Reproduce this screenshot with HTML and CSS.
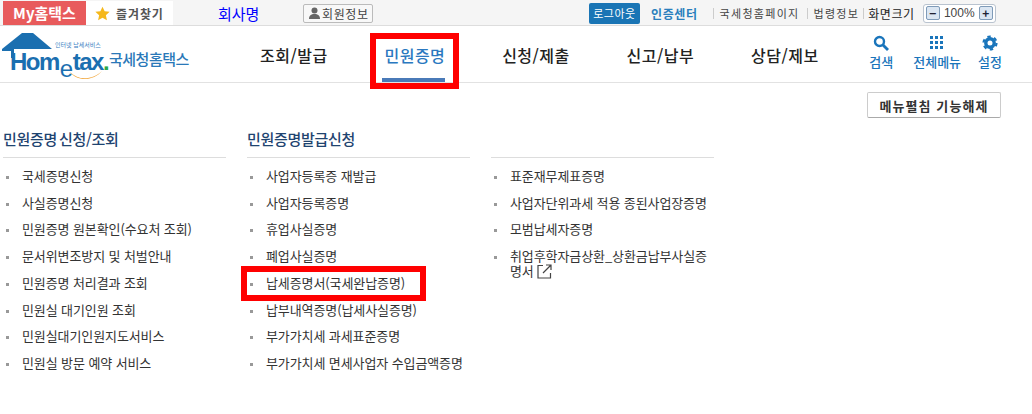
FILE: index.html
```html
<!DOCTYPE html>
<html lang="ko">
<head>
    <meta charset="UTF-8">
    <title>국세청홈택스</title>
    <link rel="stylesheet" href="styles.css">
</head>
<body>
    <!-- 상단 바 -->
    <div class="top-bar">
        <a class="my-tab">My홈택스</a>
        <div class="fav">
            <svg class="star" width="15" height="15" viewBox="0 0 24 24"><path d="M12 1l3.400 7.400 8 .9-6 5.400 1.700 8L12 18.700l-7.100 4 1.700-8-6-5.400 8-.9z" fill="#f5b81c"/></svg>
            <span>즐겨찾기</span>
        </div>
        <span class="company">회사명</span>
        <a class="member-btn">
            <svg width="11" height="12" viewBox="0 0 11 12"><circle cx="5.500" cy="3.500" r="3" fill="#666"/><path d="M0 12c0-3.500 2-5 5.500-5s5.500 1.500 5.500 5z" fill="#666"/></svg>
            회원정보
        </a>
        <div class="top-right">
            <a class="logout">로그아웃</a>
            <a class="cert">인증센터</a>
            <a class="util first">국세청홈페이지</a>
            <a class="util">법령정보</a>
            <a class="util dark">화면크기</a>
            <div class="zoom-box">
                <span class="zoom-btn">−</span>
                <span class="zoom-val">100%</span>
                <span class="zoom-btn">+</span>
            </div>
        </div>
    </div>

    <!-- 로고 + 메인메뉴 -->
    <header class="main-head">
        <div class="logo">
            <svg class="logo-house" width="54" height="26" viewBox="0 0 54 26"><path d="M0 16L20 0H31L50 16H12V25H9V18H0z" fill="#1b6fb0"/></svg>
            <span class="logo-small">인터넷 납세서비스</span>
            <span class="logo-word">Hom<em>e</em>tax<i>.</i></span>
            <svg class="logo-smile" width="34" height="10" viewBox="0 0 34 10"><path d="M1 2c9 9 22 8 32-1-8 10-25 11-32 1z" fill="#f2a63a"/></svg>
            <span class="logo-name">국세청홈택스</span>
        </div>
        <nav class="main-nav">
            <a>조회/발급</a>
            <a class="active">민원증명</a>
            <a>신청/제출</a>
            <a>신고/납부</a>
            <a>상담/제보</a>
        </nav>
        <div class="tools">
            <a class="tool">
                <svg width="16" height="16" viewBox="0 0 16 16"><circle cx="6.500" cy="6.500" r="4.500" fill="none" stroke="#1a75bb" stroke-width="2.400"/><path d="M10 10l5 5" stroke="#1a75bb" stroke-width="2.800"/></svg>
                검색
            </a>
            <a class="tool">
                <svg width="16" height="16" viewBox="0 0 16 16" fill="#1a75bb"><rect x="1" y="1" width="3" height="3"/><rect x="6" y="1" width="3" height="3"/><rect x="11" y="1" width="3" height="3"/><rect x="1" y="6" width="3" height="3"/><rect x="6" y="6" width="3" height="3"/><rect x="11" y="6" width="3" height="3"/><rect x="1" y="11" width="3" height="3"/><rect x="6" y="11" width="3" height="3"/><rect x="11" y="11" width="3" height="3"/></svg>
                전체메뉴
            </a>
            <a class="tool">
                <svg width="16" height="16" viewBox="0 0 16 16" fill="none" stroke="#1a75bb"><circle cx="8" cy="8" r="4.200" stroke-width="3.400"/><circle cx="8" cy="8" r="6.500" stroke-width="2.200" stroke-dasharray="3.400 3.400"/></svg>
                설정
            </a>
        </div>
    </header>

    <div class="btn-row">
        <button class="unfold-btn">메뉴펼침 기능해제</button>
    </div>

    <!-- 메뉴 목록 -->
    <div class="menu-wrap">
        <section class="menu-col">
            <h2>민원증명 신청/조회</h2>
            <ul>
                <li>국세증명신청</li>
                <li>사실증명신청</li>
                <li>민원증명 원본확인(수요처 조회)</li>
                <li>문서위변조방지 및 처벌안내</li>
                <li>민원증명 처리결과 조회</li>
                <li>민원실 대기인원 조회</li>
                <li>민원실대기인원지도서비스</li>
                <li>민원실 방문 예약 서비스</li>
            </ul>
        </section>
        <section class="menu-col">
            <h2>민원증명발급신청</h2>
            <ul>
                <li>사업자등록증 재발급</li>
                <li>사업자등록증명</li>
                <li>휴업사실증명</li>
                <li>폐업사실증명</li>
                <li class="marked">납세증명서(국세완납증명)</li>
                <li>납부내역증명(납세사실증명)</li>
                <li>부가가치세 과세표준증명</li>
                <li>부가가치세 면세사업자 수입금액증명</li>
            </ul>
        </section>
        <section class="menu-col">
            <h2 class="blank">&nbsp;</h2>
            <ul>
                <li>표준재무제표증명</li>
                <li>사업자단위과세 적용 종된사업장증명</li>
                <li>모범납세자증명</li>
                <li>취업후학자금상환_상환금납부사실증명서
                    <svg class="ext" width="15" height="15" viewBox="0 0 15 15" fill="none" stroke="#444" stroke-width="1.200"><path d="M6 1.500H1v12.500h12.500V9"/><path d="M9 1h5v5M14 1L6 9"/></svg>
                </li>
            </ul>
        </section>
    </div>
</body>
</html>
```

FILE: styles.css
```css
*, *::before, *::after {
    box-sizing: border-box;
}
html, body {
    margin: 0;
    padding: 0;
}
body {
    width: 1032px;
    height: 414px;
    overflow: hidden;
    background: #fff;
    color: #333;
    font-family: "Noto Sans CJK KR", "Noto Sans", sans-serif;
    font-size: 12px;
}
a {
    text-decoration: none;
    color: inherit;
}

/* top bar */
.top-bar {
    display: flex;
    align-items: center;
    height: 26px;
    padding: 1px 0 0 3px;
    background: #f5f5f5;
    border-bottom: 1px solid #ddd;
}
.my-tab {
    width: 83px;
    height: 24px;
    line-height: 23px;
    text-align: center;
    background: #e85b5c;
    color: #fff;
    font-size: 15px;
    font-weight: 700;
}
.fav {
    display: flex;
    align-items: center;
    width: 87px;
    height: 24px;
    padding-left: 9px;
    background: #fff;
    color: #555;
    font-weight: 700;
    letter-spacing: 0.9px;
}
.star {
    margin-right: 6px;
}
.company {
    width: 42px;
    margin-left: 45px;
    color: #0000ff;
    font-size: 15px;
    white-space: nowrap;
}
.member-btn {
    display: flex;
    align-items: center;
    gap: 2px;
    width: 70px;
    height: 19px;
    margin-left: 43px;
    padding-left: 5px;
    border: 1px solid #bbb;
    border-radius: 2px;
    background: #f8f8f8;
    color: #444;
    font-size: 12px;
    letter-spacing: 0.6px;
}
.top-right {
    display: flex;
    align-items: center;
    margin-left: 216px;
}
.logout {
    width: 51px;
    height: 21px;
    line-height: 20px;
    text-align: center;
    border-radius: 2px;
    background: #1a75b5;
    color: #fff;
    font-size: 11px;
    letter-spacing: 0.5px;
}
.cert {
    margin-left: 11px;
    color: #2a7fbd;
    font-weight: 700;
    font-size: 12px;
    letter-spacing: 0.6px;
}
.util {
    margin-left: 7px;
    padding-left: 6px;
    border-left: 1px solid #ccc;
    line-height: 11px;
    font-size: 11px;
    letter-spacing: 1.300px;
    color: #444;
}
.util.first {
    margin-left: 15px;
}
.util.dark {
    margin-left: 4px;
    padding-left: 4px;
    color: #222;
    font-size: 12px;
    letter-spacing: 0.6px;
}
.zoom-box {
    display: flex;
    align-items: center;
    justify-content: space-between;
    width: 73px;
    height: 19px;
    margin-left: 8px;
    padding: 0 2px;
    border: 1px solid #b9c3cf;
    border-radius: 3px;
    background: #fff;
}
.zoom-btn {
    width: 14px;
    height: 14px;
    line-height: 12px;
    text-align: center;
    border: 1px solid #7f9bb8;
    border-radius: 2px;
    background: #dbe6f2;
    color: #223;
    font-size: 12px;
    font-weight: 700;
}
.zoom-val {
    font-family: "Liberation Sans", sans-serif;
    font-size: 12px;
    color: #444;
}

/* logo + main menu */
.main-head {
    display: flex;
    height: 57px;
    border-bottom: 1px solid #e2e2e2;
}
.logo {
    position: relative;
    width: 231px;
    height: 56px;
}
.logo-house {
    position: absolute;
    left: 2px;
    top: 7px;
}
.logo-small {
    position: absolute;
    left: 55px;
    top: 15px;
    font-size: 6px;
    line-height: 8px;
    color: #3a7fbf;
    white-space: nowrap;
}
.logo-word {
    position: absolute;
    left: 10px;
    top: 24px;
    font-family: "Liberation Sans", sans-serif;
    font-size: 24px;
    line-height: 24px;
    font-weight: 700;
    letter-spacing: -1.500px;
    color: #1b6fb0;
}
.logo-word em {
    position: relative;
    top: 7px;
    margin: 0 1px;
    font-style: normal;
    font-weight: 400;
}
.logo-word i {
    font-style: normal;
    color: #2aa84a;
}
.logo-smile {
    position: absolute;
    left: 69px;
    top: 44px;
}
.logo-name {
    position: absolute;
    left: 109px;
    top: 23px;
    font-size: 15px;
    line-height: 20px;
    font-weight: 500;
    letter-spacing: -0.500px;
    color: #2a78b8;
}
.main-nav {
    display: flex;
    gap: 56.800px;
    padding-left: 29px;
}
.main-nav a {
    position: relative;
    padding-top: 17px;
    color: #222;
    font-size: 16px;
    line-height: 24px;
    font-weight: 500;
    letter-spacing: 0.500px;
    white-space: nowrap;
}
.main-nav a.active {
    color: #2a78c0;
}
/* 파란 밑줄 + 빨간 표시 */
.main-nav a.active::before {
    content: "";
    position: absolute;
    left: -2px;
    right: 0;
    bottom: 0;
    height: 4px;
    background: #4a7ab8;
}
.main-nav a.active::after {
    content: "";
    position: absolute;
    left: -14px;
    right: -14px;
    top: 7px;
    height: 56px;
    border: 6px solid #f00;
}
.tools {
    display: flex;
    gap: 17px;
    margin-left: auto;
    padding-right: 30px;
}
.tool {
    display: flex;
    flex-direction: column;
    align-items: center;
    padding-top: 9px;
    color: #1a75bb;
    font-size: 13px;
    line-height: 18px;
    font-weight: 500;
    white-space: nowrap;
}
.tool:first-child {
    margin-right: 3px;
}
.tool svg {
    margin-bottom: 2px;
}

.btn-row {
    display: flex;
    justify-content: flex-end;
    padding: 9px 31px 0 0;
}
.unfold-btn {
    width: 134px;
    height: 26px;
    padding: 0;
    border: 1px solid #ccc;
    border-bottom-color: #aaa;
    border-radius: 2px;
    background: #fff;
    color: #333;
    font-family: inherit;
    font-size: 13px;
    font-weight: 700;
    letter-spacing: 1.100px;
}

/* menu columns */
.menu-wrap {
    display: flex;
    gap: 21px;
    padding: 9px 0 0 3px;
}
.menu-col {
    width: 223px;
}
.menu-col h2 {
    height: 31px;
    margin: 0;
    border-bottom: 1px solid #ddd;
    color: #1f4470;
    font-size: 15px;
    line-height: 23px;
    font-weight: 500;
    letter-spacing: -0.300px;
    word-spacing: -2px;
}
.menu-col ul {
    margin: 0;
    padding: 5px 0 0;
    list-style: none;
}
.menu-col li {
    position: relative;
    padding: 6px 0 6px 19px;
    color: #333;
    font-size: 13px;
    line-height: 14.700px;
    letter-spacing: -0.100px;
}
.menu-col li::before {
    content: "";
    position: absolute;
    left: 3px;
    top: 13px;
    width: 3px;
    height: 3px;
    background: #999;
}
.menu-col li.marked::after {
    content: "";
    position: absolute;
    left: -6px;
    top: -4px;
    width: 185px;
    height: 35px;
    border: 6px solid #f00;
}
.ext {
    vertical-align: -3px;
}
```
